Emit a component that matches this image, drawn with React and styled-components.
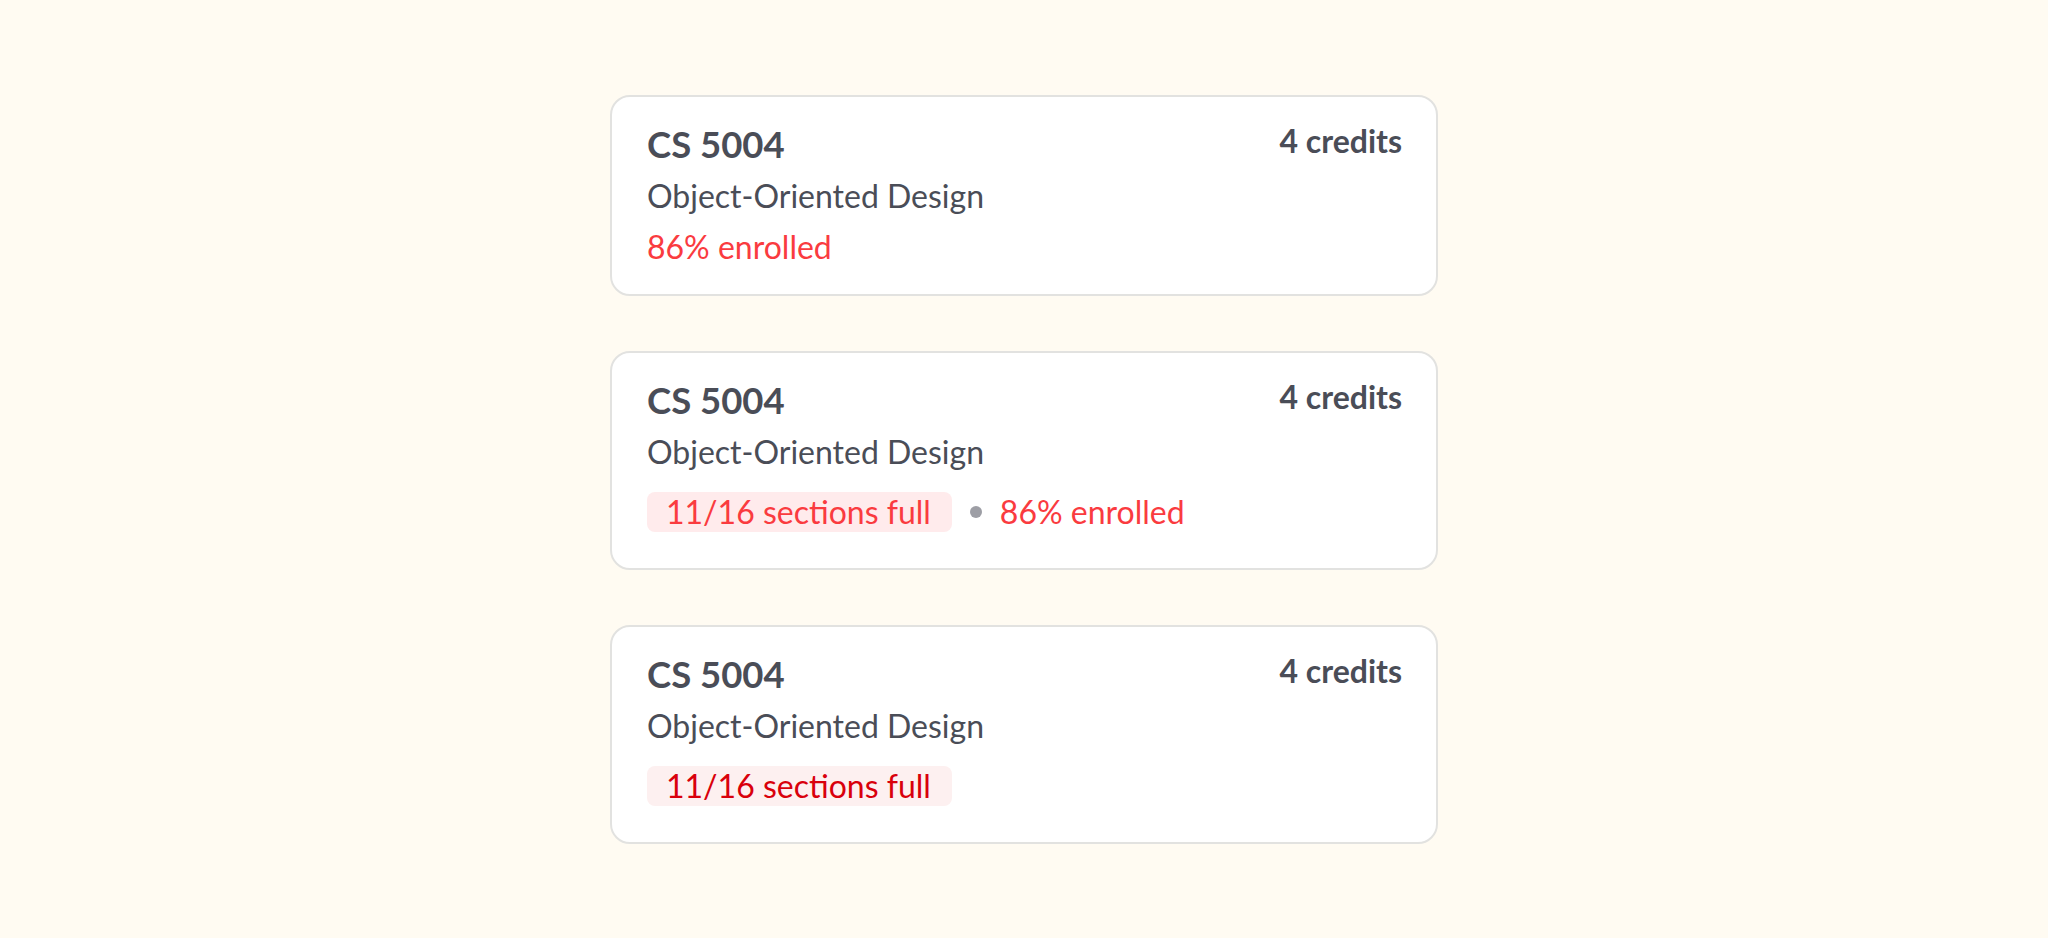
import React from "react";
import styled, { createGlobalStyle } from "styled-components";

const GlobalStyle = createGlobalStyle`
  html, body {
    margin: 0;
    padding: 0;
    background: #fffbf2;
  }
  body {
    font-family: Lato, "Noto Sans", "Liberation Sans", sans-serif;
  }
`;

const Page = styled.main`
  min-height: 100vh;
  box-sizing: border-box;
  display: flex;
  flex-direction: column;
  align-items: center;
  justify-content: center;
  gap: 55px;
  background: #fffbf2;
`;

const Card = styled.section`
  box-sizing: border-box;
  width: 828px;
  background: #ffffff;
  border: 2px solid #e2e2e0;
  border-radius: 20px;
  padding: 26px 34px 29px 35px;
  display: flex;
  flex-direction: column;
`;

const Header = styled.div`
  display: flex;
  justify-content: space-between;
  align-items: flex-start;
`;

const Code = styled.h2`
  margin: 0;
  font-size: 36.5px;
  line-height: 43px;
  font-weight: 700;
  color: #4a4d57;
`;

const Credits = styled.span`
  font-size: 32px;
  line-height: 36px;
  font-weight: 700;
  color: #4a4d57;
`;

const Name = styled.p`
  margin: 12px 0 0;
  font-size: 32px;
  line-height: 36px;
  color: #4a4d57;
`;

const Meta = styled.div`
  margin-top: 15px;
  display: flex;
  align-items: center;
  gap: 18px;
`;

const Enrolled = styled.span`
  font-size: 32px;
  line-height: 36px;
  color: #fa3b3f;
`;

const Badge = styled.span`
  margin: 7px 0;
  padding: 2px 21px 2px 19px;
  border-radius: 8px;
  font-size: 32px;
  line-height: 36px;
  background: ${(p) => (p.$strong ? "#fdf0f0" : "#ffebec")};
  color: ${(p) => (p.$strong ? "#d9000c" : "#fa3b3f")};
`;

const Dot = styled.span`
  width: 12px;
  height: 12px;
  border-radius: 50%;
  background: #9d9ea5;
  flex: none;
`;

function CourseCard({ badge, enrolled, strong }) {
  return (
    <Card>
      <Header>
        <Code>CS 5004</Code>
        <Credits>4 credits</Credits>
      </Header>
      <Name>Object-Oriented Design</Name>
      <Meta>
        {badge && <Badge $strong={strong}>11/16 sections full</Badge>}
        {badge && enrolled && <Dot />}
        {enrolled && <Enrolled>86% enrolled</Enrolled>}
      </Meta>
    </Card>
  );
}

export default function App() {
  return (
    <>
      <GlobalStyle />
      <Page>
        <CourseCard enrolled />
        <CourseCard badge enrolled />
        <CourseCard badge strong />
      </Page>
    </>
  );
}
